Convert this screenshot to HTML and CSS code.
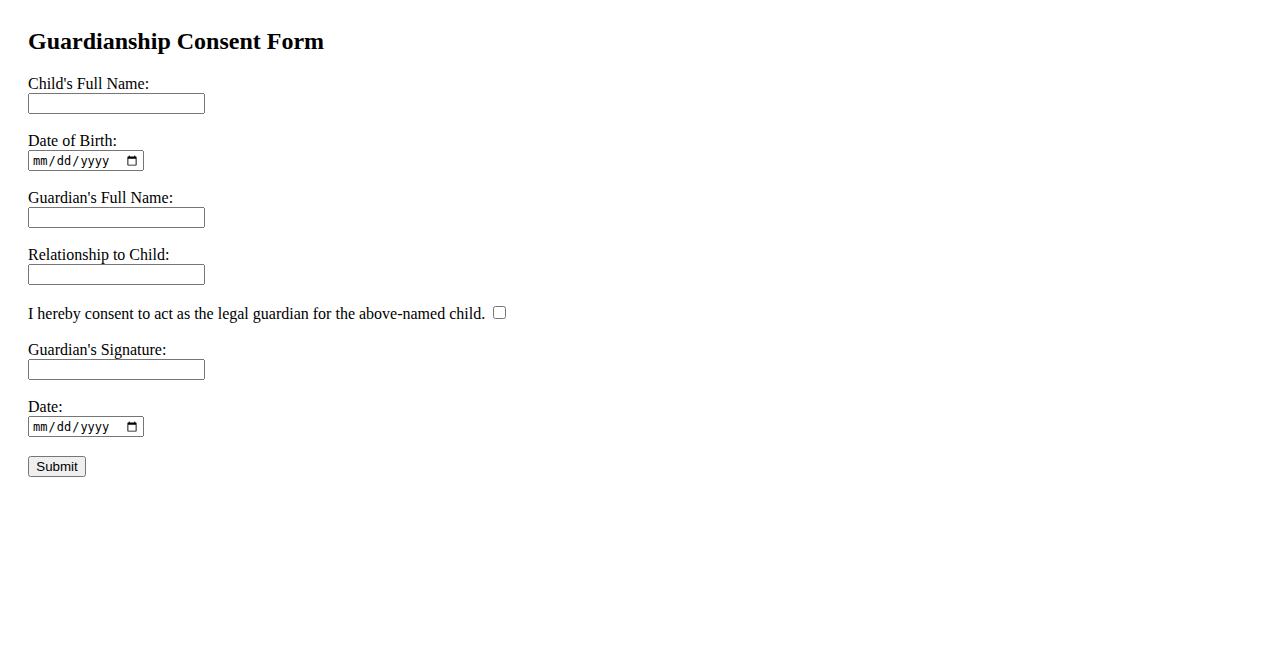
FILE: index.html
```html
<!DOCTYPE html>
<html>
<head>
<meta charset="utf-8">
<title>Guardianship Consent Form</title>
<link rel="stylesheet" href="styles.css">
</head>
<body>
<h2 class="title">Guardianship Consent Form</h2>
<form class="form">
  <div class="field">
    <label class="label" for="child">Child's Full Name:</label>
    <input class="control text" type="text" id="child">
  </div>
  <div class="field">
    <label class="label" for="dob">Date of Birth:</label>
    <input class="control date" type="date" id="dob">
  </div>
  <div class="field">
    <label class="label" for="guardian">Guardian's Full Name:</label>
    <input class="control text" type="text" id="guardian">
  </div>
  <div class="field">
    <label class="label" for="rel">Relationship to Child:</label>
    <input class="control text" type="text" id="rel">
  </div>
  <div class="field consent">
    <label for="consent">I hereby consent to act as the legal guardian for the above-named child.</label>
    <input type="checkbox" id="consent">
  </div>
  <div class="field">
    <label class="label" for="sig">Guardian's Signature:</label>
    <input class="control text" type="text" id="sig">
  </div>
  <div class="field">
    <label class="label" for="date">Date:</label>
    <input class="control date" type="date" id="date">
  </div>
  <div class="field actions">
    <button class="submit" type="submit">Submit</button>
  </div>
</form>
</body>
</html>
```

FILE: styles.css
```css
body {
  margin: 27px 28px;
  font-family: "Liberation Serif", "Times New Roman", serif;
  font-size: 16px;
  color: #000;
  background: #fff;
}

.title {
  font-size: 24px;
  font-weight: bold;
  margin: 0 0 20px 0;
  line-height: 28px;
}

.form {
  margin: 0;
}

.field {
  margin-bottom: 18px;
}

.label {
  display: block;
  line-height: 18px;
}

.control {
  display: block;
  margin: 0;
  box-sizing: border-box;
  height: 21px;
}

.text {
  width: 177px;
}

.date {
  width: 116px;
  font-size: 12px;
  padding: 1px 2px;
}

.consent {
  line-height: 19px;
  margin-bottom: 18px;
}

.actions {
  padding-top: 1px;
}

.submit {
  display: block;
  margin: 0;
  width: 58px;
  height: 21px;
  font-family: "Liberation Sans", Arial, sans-serif;
  font-size: 13.33px;
  padding: 1px 6px;
}
```
